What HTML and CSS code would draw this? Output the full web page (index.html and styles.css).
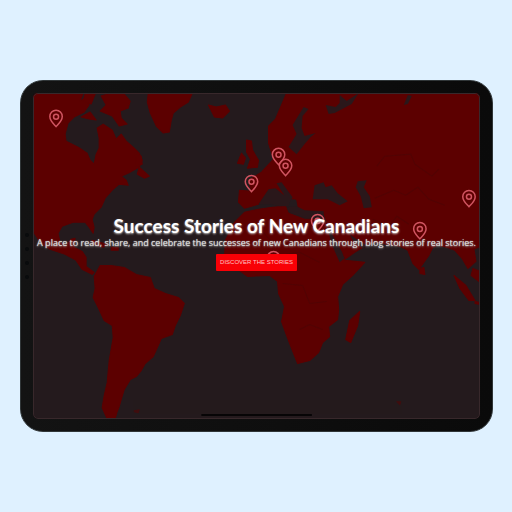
FILE: index.html
```html
<!DOCTYPE html>
<html lang="en">
<head>
<meta charset="utf-8">
<meta name="viewport" content="width=device-width, initial-scale=1">
<title>Success Stories of New Canadians</title>
<link rel="stylesheet" href="styles.css">
</head>
<body>
<main class="tablet">
  <span class="sensors"><i></i><i></i><i></i><i></i></span>
  <section class="screen">
    <svg class="map" viewBox="33 93 446 326" preserveAspectRatio="xMidYMid slice" aria-hidden="true">
      <defs>
        <g id="pin" fill="none" stroke="#d05460" stroke-width="1.5">
          <path d="M0 8.500C-2.600 5.600-6.200 2.600-6.200-1.600A6.200 6.200 0 0 1 6.200-1.600C6.200 2.600 2.600 5.600 0 8.500Z"/>
          <circle cx="0" cy="-1.400" r="2.500"/>
        </g>
      </defs>
      <g class="land">
        <path d="M33 93H83L80 101L86 98L89 105L84 112L78 115L74 117L68 123L65 134L66 141L78 147L87 153L90 160L94 164L96 154L99 148L99 138L97 128L103 124L112 130L116 139L121 134L126 141L134 148L139 153L142 160L139 167L130 172L121 176L126 180L128 185L119 184L112 190L105 198L101 207L94 214L92 219L94 227L93 233L89 227L85 222L73 222L62 226L58 233L60 242L66 245L71 239L75 238L74 247L82 251L86 257L86 266L94 272L92 274L82 269L76 260L65 254L50 249L41 243L35 234L33 230Z"/>
        <path d="M81 117L90 112L96 120L89 119ZM85 94H95L91 104L83 101ZM101 96L111 93H123L130 101L128 108L120 111L121 118L127 124L119 126L112 116L100 111L106 105Z"/>
        <path d="M135 153L141 156L142 164L136 166ZM139 167L149 176L144 178L137 174ZM92 240L107 244L103 247L92 244ZM111 247H118V250H111Z"/>
        <path d="M148 93H192L188 102L180 107L173 113L171 120L169 132L163 133L156 126L150 113L147 102Z"/>
        <path d="M208 105L216 107L225 105L229 111L222 118L214 117Z"/>
        <path d="M94 276L100 265H111L124 267L136 274L150 277L154 288L165 293L178 297L184 303L180 315L175 325L172 334L161 338L158 345L153 356L145 363L141 370L136 376L130 379L124 389L121 399L119 406L117 411L115 418H107L102 407L104 395L107 382L109 360L113 337L112 325L104 320L98 307L93 297L95 288Z"/>
        <path class="islet" d="M134 410L139 409L138 412L134 411ZM396 401H400L399 404Z"/>
        <path d="M246 140L251 141L252 150L258 160L257 167L247 168L250 159L246 152ZM241 153L245 158L243 164L237 163Z"/>
        <path d="M479 93V246L473 249L475 261L467 268L461 258L454 250L446 247L437 245L432 247L428 255L418 269L412 263L407 250L399 246L386 244L373 242L362 247L354 252L344 259L342 252L328 227L323 213L309 211L298 209L296 199L287 198L285 202L274 193L268 190L258 204L244 208L238 202L239 190L251 191L248 180L261 172L273 159L268 143L268 126L275 119L286 93Z"/>
        <path d="M244 212L258 209L272 207L285 206L288 213L304 219L321 219L325 222L333 240L344 260L364 262L352 275L342 284L337 296L338 309L337 319L328 326L329 336L322 342L318 352L309 360L297 363L291 348L286 335L281 321L284 306L278 293L277 281L269 275L247 276L236 268L224 257L225 240L234 222Z"/>
        <path d="M359 311L357 325L350 342L345 339L349 320ZM423 267L424 274L419 273L419 268ZM453 275L465 285L474 300L468 300L459 288ZM472 268L479 271V282L470 275ZM474 301L479 302V304L474 303Z"/>
      </g>
      <g class="water">
        <path d="M303 107L308 109L302 116L301 128L304 136L315 133L310 137L304 144L296 154L288 147L296 134L292 125Z"/>
        <path d="M325 105L335 107L339 103L339 95L346 101L358 93L351 104L334 113L328 114ZM403 105L407 95L411 96L407 104Z"/>
        <path d="M258 204L268 189L275 188L281 193L290 200L288 206L279 206L271 204ZM276 183L281 182L292 197L289 202L283 194ZM312 199L314 185L323 182L325 187L331 185L337 193L347 201L339 205L327 199Z"/>
        <path d="M357 181L366 180L363 187L369 196L371 207L363 208L360 196L355 187ZM286 207L296 206L304 210L323 211L323 218L306 218L288 212ZM326 224L333 237L344 258L339 262L331 244ZM349 234L356 239L367 246L362 248L352 240Z"/>
      </g>
      <g class="borders">
        <path d="M376 166L384 156L410 154L414 164L431 176L438 169M374 198L393 190L405 195L417 187L428 199L444 205M256 225L270 240L274 256L299 252L319 262M282 283L302 285L309 303L326 301M299 329L309 324L322 329M372 219L388 226L396 216L408 224"/>
      </g>
      <use href="#pin" x="56" y="118"/>
      <use href="#pin" x="278" y="156"/>
      <use href="#pin" x="285" y="167"/>
      <use href="#pin" x="251" y="183"/>
      <use href="#pin" x="468" y="198"/>
      <use href="#pin" x="419" y="230"/>
      <use href="#pin" x="317" y="222"/>
      <use href="#pin" x="273" y="259"/>
    </svg>
    <div class="hero">
      <h1 class="title">Success Stories of New Canadians</h1>
      <p class="tagline">A place to read, share, and celebrate the successes of new Canadians through blog stories of real stories.</p>
      <button class="cta" type="button">DISCOVER THE STORIES</button>
    </div>
    <span class="home-bar"></span>
  </section>
</main>
</body>
</html>
```
FILE: styles.css
```css
* { box-sizing: border-box; }
body {
  margin: 0;
  min-height: 100vh;
  display: grid;
  grid-template-columns: minmax(0, 1fr);
  align-items: center;
  padding: 0 19px 0 20px;
  background: #dff1ff;
  font-family: Lato, "Open Sans", sans-serif;
}
.tablet {
  position: relative;
  padding: 12px;
  border: 1px solid #303638;
  border-radius: 23px;
  background: linear-gradient(90deg, #131313, #0a0a0a);
}
.sensors {
  position: absolute;
  left: 4px;
  top: 50%;
  display: grid;
  gap: 10px;
  transform: translateY(-50%);
}
.sensors i {
  width: 4px;
  height: 4px;
  border-radius: 50%;
  background: #090b0c;
}
.screen {
  position: relative;
  display: grid;
  grid-template-columns: minmax(0, 1fr);
  aspect-ratio: 446 / 326;
  overflow: hidden;
  border-radius: 5px;
  background: #241a1d;
}
.screen::after {
  content: "";
  position: absolute;
  inset: 0;
  border: 1px solid #38282b;
  border-radius: 5px;
  pointer-events: none;
}
.map {
  position: absolute;
  inset: 0;
  width: 100%;
  height: 100%;
}
.land { fill: #5c0000; stroke: #5c0000; stroke-width: 1; stroke-linejoin: round; }
.land .islet { opacity: 0.5; }
.water { fill: #2a171a; }
.borders { fill: none; stroke: #480506; stroke-width: 1; opacity: 0.5; }
.hero {
  position: relative;
  align-self: center;
  display: flex;
  flex-direction: column;
  align-items: center;
  padding-bottom: 28px;
  color: #fff;
  text-align: center;
  white-space: nowrap;
}
.title {
  margin: 0;
  font-size: 19px;
  line-height: 23px;
  font-weight: 700;
  text-shadow: 0 1px 2px #ccc;
}
.tagline {
  margin: 0 0 6px;
  font-family: "Open Sans", sans-serif;
  font-size: 9px;
  line-height: 11px;
  font-weight: 500;
  color: #ddd;
  text-shadow: 0 0 1px #bbb, 0 1px 2px #999;
}
.cta {
  padding: 0 4px;
  border: 0;
  border-radius: 1px;
  background: #f80006;
  color: #ffc4c4;
  font: 6px/17px "Liberation Sans", sans-serif;
}
.home-bar {
  position: absolute;
  bottom: 3px;
  left: 50%;
  width: 25%;
  height: 2px;
  border-radius: 1px;
  background: #070506;
  transform: translateX(-50%);
}
```
